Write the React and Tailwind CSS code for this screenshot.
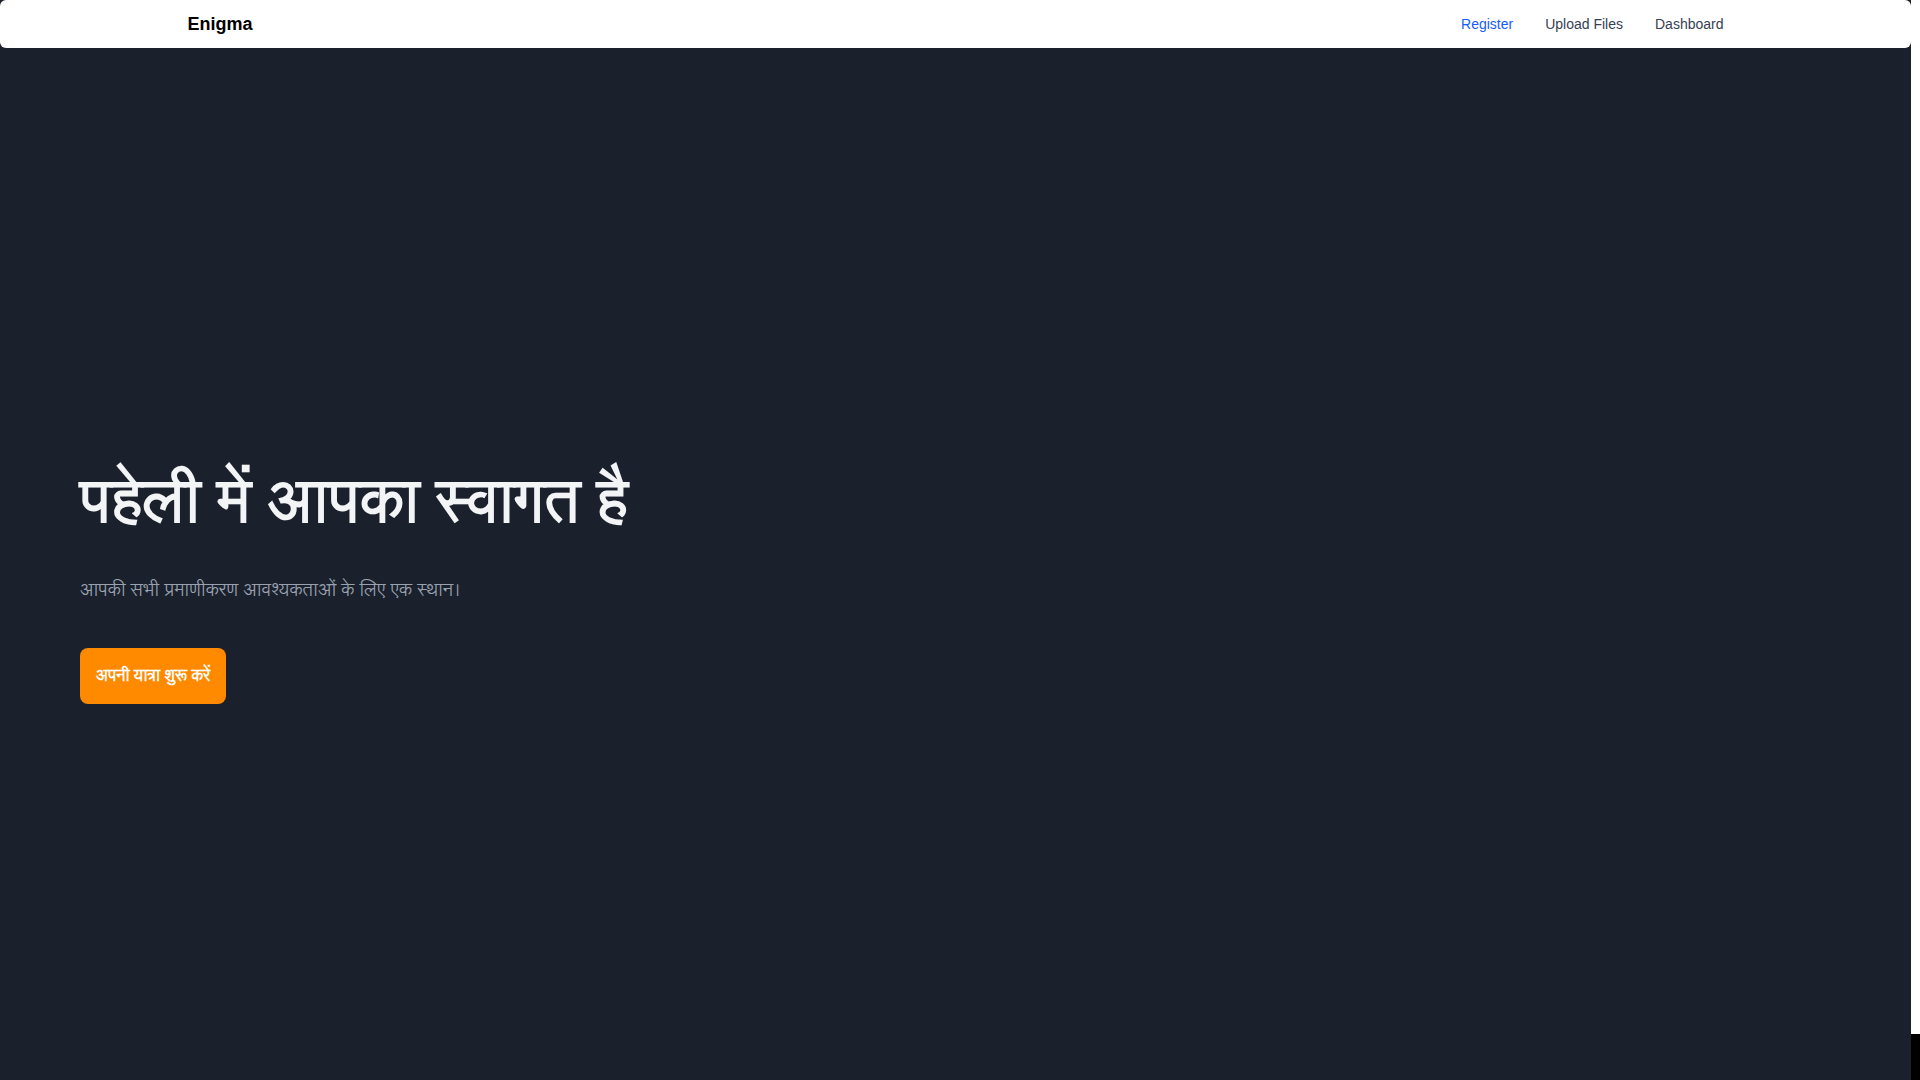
import React from "react";

const navLinks = [
  { label: "Register", active: true },
  { label: "Upload Files" },
  { label: "Dashboard" },
];

export default function App() {
  return (
    <div className="flex h-[1080px] w-full overflow-hidden bg-white" style={{ fontFamily: '"Liberation Sans", "Lohit Devanagari", sans-serif' }}>
      <div className="flex w-[1911px] flex-col bg-[#1a202c]">
        {/* Navbar */}
        <nav className="h-12 rounded-md bg-white">
          <div className="mx-auto flex h-full max-w-[1536px] items-center justify-between">
            <span className="text-lg font-bold text-black">Enigma</span>
            <div className="flex items-center gap-8 text-sm">
              {navLinks.map((l) => (
                <a key={l.label} href="#" className={l.active ? "text-blue-600" : "text-gray-700"}>
                  {l.label}
                </a>
              ))}
            </div>
          </div>
        </nav>

        {/* Hero */}
        <main className="flex flex-1 items-center px-20 pt-[48px]">
          <div className="flex flex-col items-start">
            <h1 className="text-6xl font-bold text-gray-100">पहेली में आपका स्वागत है</h1>
            <p className="mt-11 text-lg text-gray-400">आपकी सभी प्रमाणीकरण आवश्यकताओं के लिए एक स्थान।</p>
            <button className="mt-11 rounded-lg bg-[#ff8a00] px-4 py-4 text-base font-bold text-white">
              अपनी यात्रा शुरू करें
            </button>
          </div>
        </main>
      </div>
      <div className="flex w-[9px] flex-col">
        <div className="flex-1 bg-white" />
        <div className="h-[46px] bg-black" />
      </div>
    </div>
  );
}
